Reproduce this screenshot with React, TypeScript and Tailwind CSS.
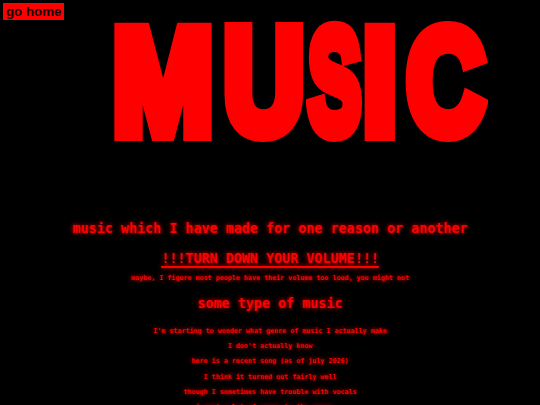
import React from "react";

const glow = "[text-shadow:0_0_4px_#ff0000]";
const big =
  "inline-block origin-center whitespace-nowrap font-['Liberation_Sans',Arial,sans-serif] text-[149px] font-bold leading-[123px] text-[#ff0000] [-webkit-text-stroke:16px_#ff0000]";

export default function App() {
  const lines = [
    "I'm starting to wonder what genre of music I actually make",
    "I don't actually know",
    "here is a recent song (as of july 2026)",
    "I think it turned out fairly well",
    "though I sometimes have trouble with vocals",
    "i want a lot of songs to the songs...",
  ];
  return (
    <div className="min-h-screen w-full overflow-hidden bg-black text-[#ff0000]">
      <div className="flex pl-[3px] pt-[3px]">
        <button className="h-[17px] bg-[#ff0000] px-[3px] font-['Liberation_Sans',Arial,sans-serif] text-[13.3px] font-bold leading-[17px] text-[#140000]">
          go home
        </button>
      </div>
      <h1 className="flex h-[127px] pl-[115px]" aria-label="MUSIC">
        <span className="flex w-[97px] justify-center">
          <span className={`${big} scale-x-[0.81]`}>M</span>
        </span>
        <span className="ml-[12px] flex w-[79px] justify-center">
          <span className={`${big} scale-x-[0.745]`}>U</span>
        </span>
        <span className="ml-[5px] flex w-[54px] justify-center">
          <span className={`${big} scale-x-[0.53]`}>S</span>
        </span>
        <span className="ml-[5px] flex w-[26px] justify-center">
          <span className={`${big} scale-x-[0.81]`}>I</span>
        </span>
        <span className="ml-[12px] flex w-[82px] justify-center">
          <span className={`${big} scale-x-[0.72]`}>C</span>
        </span>
      </h1>
      <div className={`flex flex-col items-center font-['DejaVu_Sans_Mono',monospace] font-bold ${glow}`}>
        <h3 className="mt-[74px] text-[13.4px] leading-[16px]">
          music which I have made for one reason or another
        </h3>
        <h3 className="mt-[14px] text-[13.4px] leading-[16px] underline decoration-[1.5px] underline-offset-[3px]">
          !!!TURN DOWN YOUR VOLUME!!!
        </h3>
        <p className="mt-[7px] text-[6.7px] leading-[8px]">
          maybe, I figure most people have their volume too loud, you might not
        </p>
        <h3 className="mt-[14px] text-[13.4px] leading-[16px]">some type of music</h3>
        <div className="mt-[12px] flex flex-col items-center">
          {lines.map((l, i) => (
            <p key={i} className="text-[6.7px] leading-[15.2px]">
              {l}
            </p>
          ))}
        </div>
      </div>
    </div>
  );
}
